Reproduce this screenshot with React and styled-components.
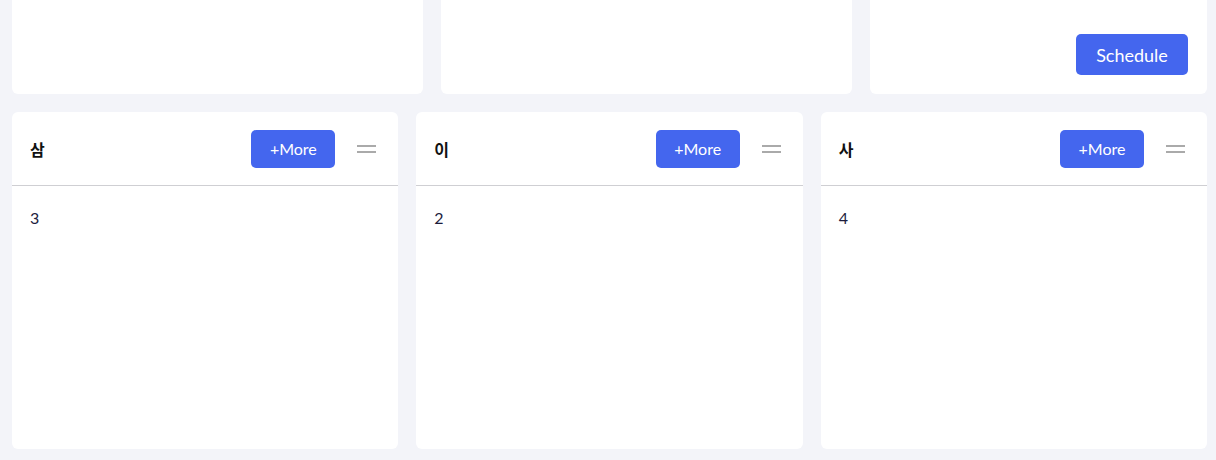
import React from "react";
import styled, { createGlobalStyle } from "styled-components";

const Global = createGlobalStyle`
  html, body { margin: 0; padding: 0; background: #f3f4f9; }
  body { font-family: "Lato", "Noto Sans CJK KR", sans-serif; overflow: hidden; }
`;

const Page = styled.div`
  display: flex;
  flex-direction: column;
  gap: 18px;
  padding: 0 9px 11px 12px;
  margin-top: -20px;
  height: 480px;
  box-sizing: border-box;
`;

const TopRow = styled.div`
  display: grid;
  grid-template-columns: 411px 411px 1fr;
  gap: 18px;
  height: 114px;
`;

const TopCard = styled.div`
  background: #fff;
  border-radius: 6px;
  display: flex;
  align-items: flex-end;
  justify-content: flex-end;
  padding: 0 19px 19px 0;
`;

const Schedule = styled.button`
  width: 112px;
  height: 41px;
  border: none;
  border-radius: 5px;
  background: #4466ee;
  color: #fff;
  font-family: "Lato", sans-serif;
  font-size: 18px;
  cursor: pointer;
`;

const BottomRow = styled.div`
  flex: 1;
  display: grid;
  grid-template-columns: 1fr 1fr 1fr;
  gap: 18px;
`;

const Card = styled.div`
  background: #fff;
  border-radius: 6px;
  display: flex;
  flex-direction: column;
`;

const Header = styled.div`
  height: 74px;
  box-sizing: border-box;
  display: flex;
  align-items: center;
  padding: 0 22px 0 18px;
  border-bottom: 1px solid #cfcfd3;
`;

const Title = styled.div`
  flex: 1;
  font-family: "Noto Sans CJK KR", sans-serif;
  font-weight: 700;
  font-size: 16px;
  color: #111;
`;

const MoreBtn = styled.button`
  width: 84px;
  height: 38px;
  border: none;
  border-radius: 5px;
  background: #4466ee;
  color: #fff;
  font-family: "Lato", sans-serif;
  font-size: 16px;
  margin-right: 22px;
  cursor: pointer;
`;

const Handle = styled.div`
  width: 19px;
  display: flex;
  flex-direction: column;
  gap: 4px;
  span {
    display: block;
    height: 2px;
    background: #aaaaaa;
  }
`;

const Body = styled.div`
  padding: 22px 18px;
  font-size: 16px;
  line-height: 20px;
  color: #1c1c3c;
  font-family: "Lato", sans-serif;
`;

const columns = [
  { title: "삼", value: "3" },
  { title: "이", value: "2" },
  { title: "사", value: "4" },
];

export default function App() {
  return (
    <>
      <Global />
      <Page>
        <TopRow>
          <TopCard />
          <TopCard />
          <TopCard>
            <Schedule>Schedule</Schedule>
          </TopCard>
        </TopRow>
        <BottomRow>
          {columns.map((c) => (
            <Card key={c.title}>
              <Header>
                <Title>{c.title}</Title>
                <MoreBtn>+More</MoreBtn>
                <Handle>
                  <span />
                  <span />
                </Handle>
              </Header>
              <Body>{c.value}</Body>
            </Card>
          ))}
        </BottomRow>
      </Page>
    </>
  );
}
